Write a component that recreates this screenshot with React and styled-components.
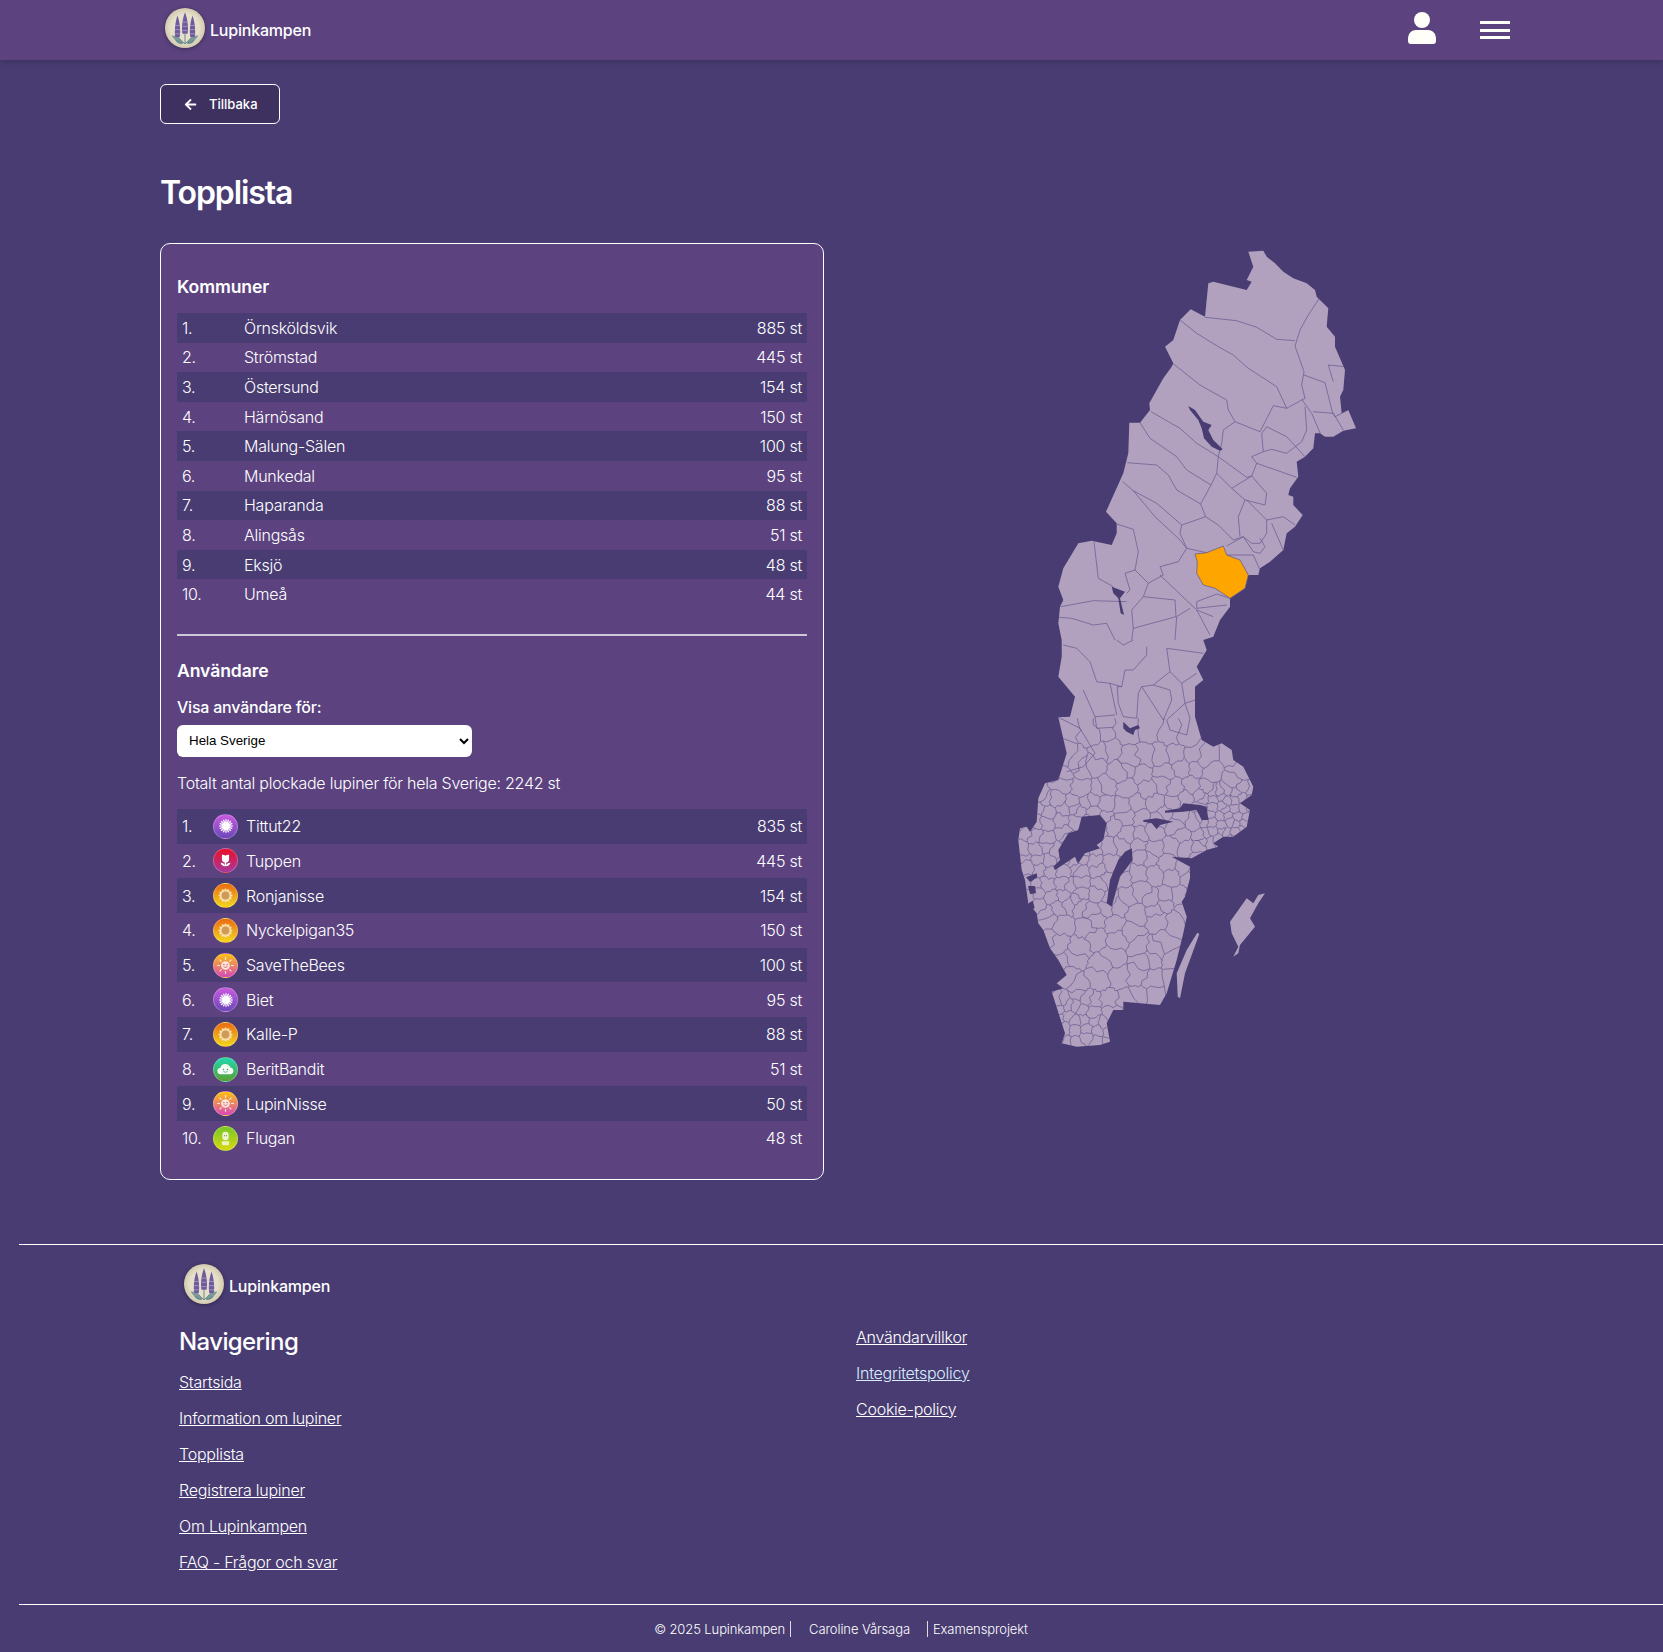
import React from "react";
import styled, { createGlobalStyle } from "styled-components";
import { FaArrowLeft } from "react-icons/fa";

const GlobalStyle = createGlobalStyle`
  html, body {
    margin: 0;
    background: #483c72;
    color: #fff;
    font-family: Inter, "Noto Sans", sans-serif;
    overflow-x: hidden;
  }
  * { box-sizing: border-box; }
`;

const Header = styled.header`
  height: 60px;
  background: #5c4380;
  box-shadow: 0 2px 6px rgba(0, 0, 0, 0.18);
  display: flex;
  align-items: center;
  padding: 0 153px 0 165px;
`;

const Brand = styled.div`
  display: flex;
  align-items: center;
  gap: 5px;
  font-size: 16px;
  font-weight: 500;
  letter-spacing: -0.2px;
  margin-left: ${({ $indent }) => $indent || 0}px;
`;

const HeaderIcons = styled.div`
  margin-left: auto;
  display: flex;
  align-items: center;
  gap: 44px;
`;

const UserIcon = styled.svg`
  margin-bottom: 4px;
`;

const LogoMark = styled.svg`
  margin-bottom: 4px;
  filter: drop-shadow(0 1px 2px rgba(0, 0, 0, 0.35));
`;

const Burger = styled.div`
  width: 30px;
  display: flex;
  flex-direction: column;
  gap: 4.5px;
  span {
    height: 3px;
    background: #fffef8;
  }
`;

const Main = styled.main`
  padding: 24px 0 0 160px;
`;

const BackButton = styled.button`
  width: 120px;
  height: 40px;
  display: flex;
  align-items: center;
  gap: 12px;
  padding: 0 0 0 23px;
  background: #3e3160;
  border: 1px solid #fff;
  border-radius: 6px;
  color: #fff;
  font: 500 13px Inter, sans-serif;
`;

const PageTitle = styled.h1`
  margin: 50px 0 31px;
  font-size: 32px;
  line-height: 38px;
  font-weight: 600;
  letter-spacing: -1.1px;
`;

const Columns = styled.div`
  display: flex;
  align-items: flex-start;
  gap: 186px;
`;

const Card = styled.section`
  width: 664px;
  background: #5c4380;
  border: 1px solid #fff;
  border-radius: 10px;
  padding: 32px 16px 23px;
`;

const CardTitle = styled.h2`
  margin: 0 0 15px;
  font-size: 17.6px;
  line-height: 22px;
  font-weight: 600;
  letter-spacing: -0.1px;
`;

const List = styled.ol`
  list-style: none;
  margin: 0;
  padding: 0;
`;

const Row = styled.li`
  height: ${({ $height }) => $height}px;
  display: flex;
  align-items: center;
  padding: 0 5px;
  font-size: 16px;
  font-weight: 300;
  letter-spacing: -0.24px;
  background: transparent;
  &:nth-child(odd) {
    background: #483c72;
  }
`;

const Rank = styled.span`
  width: ${({ $width }) => $width}px;
  flex: none;
`;

const Count = styled.span`
  margin-left: auto;
`;

const Divider = styled.hr`
  margin: 25px 0 24px;
  border: 0;
  height: 2px;
  background: #cfc8da;
`;

const FieldLabel = styled.label`
  display: block;
  margin: 1px 0 8px;
  font-size: 16px;
  line-height: 20px;
  font-weight: 500;
  letter-spacing: -0.22px;
`;

const Select = styled.select`
  display: block;
  width: 295px;
  height: 32px;
  padding: 0 4px 0 8px;
  background: #fff;
  border: 0;
  border-radius: 6px;
  color: #000;
  font: 400 13.33px "Liberation Sans", sans-serif;
`;

const Total = styled.p`
  margin: 14px 0;
  font-size: 16px;
  line-height: 24px;
  font-weight: 300;
  letter-spacing: -0.24px;
`;

const Avatar = styled.span`
  width: 25px;
  height: 25px;
  flex: none;
  margin-right: 8px;
  border-radius: 50%;
  border: 1px solid rgba(255, 255, 255, 0.25);
  background: linear-gradient(${({ $from }) => $from}, ${({ $to }) => $to});
  display: flex;
  align-items: center;
  justify-content: center;
`;

const MapBox = styled.div`
  margin-top: 2px;
  width: 360px;
  height: 815px;
  svg { display: block; }
`;

const Footer = styled.footer`
  margin: 64px 0 0 19px;
`;

const Rule = styled.hr`
  margin: 0;
  border: 0;
  height: 1px;
  background: #fff;
`;

const FooterBody = styled.div`
  padding: 19px 0 30px 160px;
`;

const FooterGrid = styled.div`
  display: grid;
  grid-template-columns: 677px 1fr;
`;

const FooterTitle = styled.h3`
  margin: 19px 0 14px;
  font-size: 24px;
  line-height: 29px;
  font-weight: 500;
  letter-spacing: -0.6px;
`;

const LinkList = styled.div`
  display: flex;
  flex-direction: column;
  align-items: flex-start;
  gap: 12px;
  margin-top: ${({ $top }) => $top || 0}px;
`;

const FooterLink = styled.a`
  color: ${({ $tint }) => $tint || "#fff"};
  font-size: 16px;
  line-height: 24px;
  font-weight: 300;
  letter-spacing: -0.24px;
  text-decoration: underline;
`;

const Credits = styled.div`
  height: 46px;
  padding-top: 3px;
  display: flex;
  align-items: center;
  justify-content: center;
  font-size: 13px;
  font-weight: 300;
  letter-spacing: -0.1px;
`;

const Credit = styled.span`
  line-height: 16px;
  padding: 0 ${({ $right }) => $right || 0}px 0 ${({ $left }) => $left || 0}px;
  border-left: ${({ $bar }) => ($bar === "left" ? "1px solid #ddd" : "0")};
  border-right: ${({ $bar }) => ($bar === "right" ? "1px solid #ddd" : "0")};
`;

const kommuner = [
  ["Örnsköldsvik", 885], ["Strömstad", 445], ["Östersund", 154], ["Härnösand", 150], ["Malung-Sälen", 100],
  ["Munkedal", 95], ["Haparanda", 88], ["Alingsås", 51], ["Eksjö", 48], ["Umeå", 44],
];

const users = [
  ["Tittut22", 835, "spark"], ["Tuppen", 445, "tulip"], ["Ronjanisse", 154, "sunflower"],
  ["Nyckelpigan35", 150, "sunflower"], ["SaveTheBees", 100, "sun"], ["Biet", 95, "spark"],
  ["Kalle-P", 88, "sunflower"], ["BeritBandit", 51, "cloud"], ["LupinNisse", 50, "sun"], ["Flugan", 48, "cactus"],
];

const badges = {
  spark: { from: "#c95ae0", to: "#6a48b8" },
  tulip: { from: "#e8102a", to: "#a8389c" },
  sunflower: { from: "#ea6a10", to: "#f2d81e" },
  sun: { from: "#fcc010", to: "#d848b8" },
  cloud: { from: "#20d8b0", to: "#58a030" },
  cactus: { from: "#78c828", to: "#d8d810" },
};

function BadgeIcon({ kind }) {
  if (kind === "spark") {
    const rays = Array.from({ length: 16 }, (_, i) => {
      const a = (i * Math.PI) / 8;
      return <line key={i} x1="12" y1="12" x2={12 + Math.cos(a) * 9} y2={12 + Math.sin(a) * 9} stroke="#fff" strokeWidth="1.7" />;
    });
    return <svg width="18" height="18" viewBox="0 0 24 24">{rays}<circle cx="12" cy="12" r="5" fill="#fff" /></svg>;
  }
  if (kind === "tulip") {
    return (
      <svg width="17" height="17" viewBox="0 0 24 24" fill="#fff">
        <path d="M7 4c2 0 3 1 5 1s3-1 5-1v6a5 5 0 0 1-10 0z" />
        <rect x="11" y="14" width="2" height="6" />
        <path d="M5 15c4 0 6 2 6.500 5C8 20 6 18 5 15zM19 15c-4 0-6 2-6.500 5C16 20 18 18 19 15z" />
      </svg>
    );
  }
  if (kind === "sunflower") {
    const petals = Array.from({ length: 12 }, (_, i) => (
      <ellipse key={i} cx="12" cy="5" rx="1.800" ry="2.800" fill="#f8e2b4" transform={`rotate(${i * 30} 12 12)`} />
    ));
    return <svg width="17" height="17" viewBox="0 0 24 24">{petals}<circle cx="12" cy="12" r="5.500" fill="#cf9a58" /></svg>;
  }
  if (kind === "sun") {
    const rays = Array.from({ length: 8 }, (_, i) => (
      <rect key={i} x="11.300" y="1.500" width="1.400" height="3.500" fill="#fff" opacity="0.8" transform={`rotate(${i * 45} 12 12)`} />
    ));
    return (
      <svg width="19" height="19" viewBox="0 0 24 24">
        {rays}
        <circle cx="12" cy="12" r="5.500" fill="#fde6d8" />
        <circle cx="10" cy="11" r="0.800" fill="#c03060" />
        <circle cx="14" cy="11" r="0.800" fill="#c03060" />
        <path d="M9.500 13.500q2.500 2 5 0" stroke="#c03060" strokeWidth="0.800" fill="none" />
      </svg>
    );
  }
  if (kind === "cloud") {
    return (
      <svg width="19" height="19" viewBox="0 0 24 24">
        <path d="M6 18a4 4 0 0 1-.5-8A6.500 6.500 0 0 1 18 9.500 4.300 4.300 0 0 1 18.500 18z" fill="#f4faf4" />
        <circle cx="9.500" cy="12" r="0.900" fill="#3a9a70" />
        <circle cx="14.500" cy="12" r="0.900" fill="#3a9a70" />
        <path d="M9.500 14.500q2.500 2 5 0" stroke="#3a9a70" strokeWidth="0.900" fill="none" />
      </svg>
    );
  }
  return (
    <svg width="17" height="17" viewBox="0 0 24 24">
      <rect x="7.500" y="2.500" width="9" height="12" rx="4.500" fill="#eef4d8" />
      <circle cx="10.500" cy="8" r="0.800" fill="#6a9a20" />
      <circle cx="13.500" cy="8" r="0.800" fill="#6a9a20" />
      <path d="M6.500 16h11l-1 5.500h-9z" fill="#eef4c0" />
    </svg>
  );
}

function Logo({ id }) {
  const spires = [[15, 9, 3.600], [24, 5, 4], [33, 9, 3.600]];
  return (
    <LogoMark width="40" height="40" viewBox="0 0 48 48">
      <defs>
        <radialGradient id={id}>
          <stop offset="0.700" stopColor="#e6dfc9" />
          <stop offset="1" stopColor="#d2c9ae" />
        </radialGradient>
      </defs>
      <circle cx="24" cy="24" r="24" fill={`url(#${id})`} />
      <path d="M8 33c6 0 11 3 14 9-6 0-11-3-14-9zM40 33c-6 0-11 3-14 9 6 0 11-3 14-9z" fill="#7f9c9e" />
      <path d="M12 38c4 0 7 2 10 5-4 1-8-1-10-5zM36 38c-4 0-7 2-10 5 4 1 8-1 10-5z" fill="#6f8e92" />
      {spires.map(([x, y, w]) => (
        <g key={x}>
          <path d={`M${x} ${y}C${x + w} ${y + 10} ${x + w} ${y + 22} ${x + w - 1} ${y + 26}H${x - w + 1}C${x - w} ${y + 22} ${x - w} ${y + 10} ${x} ${y}z`} fill="#6e5a9c" />
          <path d={`M${x} ${y + 26}L24 43`} stroke="#6b8b86" strokeWidth="1.200" />
          <path d={`M${x - 3} ${y + 12}h6M${x - 3} ${y + 17}h6M${x - 3} ${y + 22}h6`} stroke="#a89ac4" strokeWidth="1" />
        </g>
      ))}
    </LogoMark>
  );
}

/* map shapes, written in the coordinates of two crops of the picture */
const north = ([x, y]) => [x / 3 + 1000, y / 3 + 240];
const south = ([x, y]) => [x / 3 + 1000, y / 3 + 640];
const toPoints = (pts) => pts.map(([x, y]) => `${x.toFixed(1)},${y.toFixed(1)}`).join(" ");

const outline = [
  ...[[745,35],[790,32],[800,50],[825,70],[850,95],[880,115],[920,130],[945,150],[950,170],[985,205],[980,260],[1005,290],[1005,320],[1035,390],[1030,450],[1020,470],[1025,520],[1045,510],[1068,565],[1030,572],[1000,590],[975,590],[960,580],[945,580],[940,625],[915,650],[890,665],[895,710],[870,745],[865,765],[880,770],[880,795],[908,825],[885,860],[860,880],[850,930],[810,965],[780,985],[775,1005],[745,1005],[735,1045],[690,1075],[690,1100],[660,1140],[640,1190]].map(north),
  ...[[610,0],[620,30],[590,80],[610,120],[585,140],[585,230],[605,300],[640,320],[665,310],[695,330],[700,360],[730,380],[760,440],[755,465],[720,490],[750,510],[740,560],[700,590],[670,590],[640,610],[655,620],[620,630],[575,655],[515,650],[570,680],[570,715],[555,770],[545,785],[560,830],[550,880],[530,960],[500,1060],[480,1095],[370,1085],[370,1110],[340,1110],[320,1150],[330,1205],[300,1215],[230,1220],[185,1210],[195,1180],[155,1055],[190,1045],[170,1030],[200,1005],[175,960],[150,925],[130,870],[115,850],[110,820],[85,790],[75,720],[65,690],[55,600],[60,565],[80,560],[90,575],[110,545],[115,475],[135,430],[175,420],[200,340],[175,232],[210,230],[225,170],[175,110],[185,50],[185,0]].map(south),
  ...[[175,1150],[180,1100],[190,1080],[175,1040],[190,985],[235,910],[275,902],[335,915],[350,880],[350,850],[318,815],[370,700],[385,640],[388,548],[420,548],[450,510],[448,490],[490,415],[515,380],[520,370],[495,320],[520,300],[540,240],[572,208],[615,230],[625,130],[640,125],[740,150],[755,125],[740,120],[760,80]].map(north),
];

const northBorders = [
  [[615,232],[710,242],[770,262],[830,298],[885,302]],
  [[960,172],[925,225],[900,270],[885,318],[912,395],[905,435],[915,475],[860,505],[830,440],[745,385],[700,345],[655,320],[590,280],[540,240]],
  [[912,405],[975,428],[998,520],[1005,530],[1045,510]],
  [[985,375],[1000,425]],
  [[985,375],[1035,380]],
  [[518,370],[600,435],[680,480],[685,510],[705,545],[780,575],[820,497],[860,505]],
  [[905,478],[935,520],[965,590]],
  [[940,515],[1000,520],[1030,570]],
  [[915,500],[920,570],[905,605],[860,640],[815,628],[790,635],[785,580],[800,560],[860,590],[915,650]],
  [[790,635],[755,650],[770,670],[890,712]],
  [[770,670],[755,708],[695,745],[650,700],[655,650]],
  [[705,545],[670,570],[665,610],[655,650],[740,712],[755,708]],
  [[453,515],[540,565],[590,610],[655,650]],
  [[420,548],[450,595],[530,650],[560,690],[633,735],[650,700]],
  [[382,668],[470,675],[505,705],[530,750],[602,792],[633,735]],
  [[368,725],[400,752],[470,790],[545,855],[617,830],[602,792]],
  [[400,752],[440,800],[465,830],[540,900],[560,925],[620,938]],
  [[545,855],[540,880],[560,925]],
  [[617,830],[655,855],[700,900],[730,890],[680,918]],
  [[735,780],[695,745]],
  [[735,780],[715,830],[720,890]],
  [[735,780],[795,795],[800,760],[755,708]],
  [[740,780],[800,840],[800,880],[780,910],[755,910],[730,890]],
  [[800,840],[850,830],[885,855]],
  [[815,850],[850,930]],
  [[730,890],[760,935],[780,940],[795,920],[780,895]],
  [[680,945],[760,945],[780,990]],
  [[350,852],[400,868],[415,935],[405,990],[445,1030]],
  [[282,905],[295,1015],[340,1040]],
  [[560,925],[535,965],[480,980],[490,1005],[445,1030]],
  [[405,990],[375,1000],[390,1050],[380,1060]],
  [[182,1100],[280,1082],[380,1085]],
  [[175,1132],[215,1135],[280,1155],[320,1150],[345,1200]],
  [[480,1005],[590,1110],[630,1185]],
  [[445,1030],[430,1070],[395,1110],[400,1165],[395,1200]],
  [[430,1070],[525,1080],[528,1130],[400,1165]],
  [[690,1075],[650,1062],[590,1085],[590,1105],[680,1095]],
  [[590,1110],[640,1130]],
  [[570,1105],[530,1130],[525,1200]],
].map((line) => line.map(north));

const middleBorders = [
  [[190,15],[230,25],[270,65],[290,125],[330,130],[365,140]],
  [[350,0],[370,15],[400,0]],
  [[440,20],[440,45],[400,90],[375,90],[365,140],[352,140],[355,190],[370,230],[410,235],[415,160],[425,140],[490,240],[515,180],[510,150],[460,135],[425,140]],
  [[500,25],[510,95],[545,130],[590,100]],
  [[500,25],[610,40]],
  [[510,95],[460,135]],
  [[545,130],[555,190],[500,240],[510,270],[560,285],[570,235],[555,190],[585,180]],
  [[330,130],[350,225]],
  [[250,150],[285,230],[345,225]],
  [[285,230],[290,265],[340,262]],
  [[175,232],[240,265],[285,340],[250,380],[200,395]],
].map((line) => line.map(south));

const lakes = [
  [[245,530],[300,525],[320,550],[310,600],[290,615],[300,625],[255,640],[235,670],[225,650],[165,690],[160,680],[180,660],[175,630],[205,580],[235,570]],
  [[395,625],[398,660],[360,710],[335,800],[320,790],[330,720],[355,660],[375,635]],
  [[430,540],[470,535],[520,545],[480,555],[470,568],[455,550],[430,545]],
  [[495,512],[540,505],[550,490],[600,495],[620,500],[625,540],[605,540],[590,510],[550,515],[495,518]],
  [[370,245],[390,265],[415,255],[420,265],[405,270],[400,285],[380,275],[370,265]],
  [[78,712],[110,700],[112,712],[90,726]],
  [[84,738],[105,738],[108,760],[90,762]],
  [[86,790],[98,782],[104,804],[94,810]],
].map((lake) => lake.map(south));

const northLakes = [
  [[335,1040],[375,1055],[360,1075],[372,1125],[362,1120],[355,1075],[340,1060]],
  [[565,498],[585,510],[610,545],[635,555],[625,570],[640,600],[668,628],[660,632],[635,620],[612,595],[605,565],[595,540],[570,510]],
].map((lake) => lake.map(north));

const islands = [
  [[592,878],[598,882],[575,945],[555,1000],[540,1075],[533,1070],[530,1000],[560,930]],
  [[795,760],[775,765],[760,790],[740,775],[690,845],[695,880],[715,920],[700,950],[715,940],[720,915],[765,860],[750,835],[775,790]],
].map((island) => island.map(south));

const selected = [[585,942],[620,938],[670,918],[680,945],[720,960],[745,1005],[735,1045],[690,1075],[645,1045],[610,1035],[590,1000],[592,965]].map(north);

// the southern municipalities are too many to trace, so they are grown from a jittered grid
const noise = (a, b) => {
  const v = Math.sin(a * 12.9898 + b * 78.233) * 43758.5453;
  return v - Math.floor(v);
};

const seedAreas = [
  [170, 240, 600, 320, 60], [170, 320, 600, 460, 48], [600, 320, 770, 440, 56],
  [600, 440, 770, 600, 24], [55, 460, 300, 830, 36], [300, 460, 600, 830, 46],
  [110, 830, 560, 1060, 54], [340, 1060, 500, 1110, 55], [150, 1060, 340, 1225, 31],
];

const seeds = seedAreas.flatMap(([x0, y0, x1, y1, step]) => {
  const out = [];
  for (let y = y0 + step / 2; y < y1; y += step) {
    for (let x = x0 + step / 2; x < x1; x += step) {
      out.push([x + (noise(x, y) - 0.5) * step * 0.8, y + (noise(y, x) - 0.5) * step * 0.8]);
    }
  }
  return out;
});

const BOX = [40, 235, 800, 1240];

function clipCell(cell, [ax, ay], [bx, by]) {
  const mx = (ax + bx) / 2;
  const my = (ay + by) / 2;
  const side = ([x, y]) => (x - mx) * (bx - ax) + (y - my) * (by - ay);
  const out = [];
  cell.forEach((p, i) => {
    const q = cell[(i + 1) % cell.length];
    const sp = side(p);
    const sq = side(q);
    if (sp <= 0) out.push(p);
    if (sp < 0 !== sq < 0) {
      const t = sp / (sp - sq);
      out.push([p[0] + (q[0] - p[0]) * t, p[1] + (q[1] - p[1]) * t]);
    }
  });
  return out;
}

function cellBorders() {
  const done = new Set();
  let d = "";
  const onBox = ([x, y]) => x === BOX[0] || x === BOX[2] || y === BOX[1] || y === BOX[3];
  seeds.forEach((seed) => {
    let cell = [[BOX[0], BOX[1]], [BOX[2], BOX[1]], [BOX[2], BOX[3]], [BOX[0], BOX[3]]];
    seeds.forEach((other) => {
      if (other !== seed) cell = clipCell(cell, seed, other);
    });
    cell.forEach((p, i) => {
      const q = cell[(i + 1) % cell.length];
      if (onBox(p) && onBox(q)) return;
      const [a, b] = p[0] < q[0] ? [p, q] : [q, p];
      const key = [a, b].map((v) => v.map((n) => n.toFixed(1)).join()).join();
      if (done.has(key)) return;
      done.add(key);
      const [x0, y0] = south(a);
      const [x1, y1] = south(b);
      const nx = y0 - y1;
      const ny = x1 - x0;
      d += `M${x0.toFixed(1)} ${y0.toFixed(1)}`;
      for (let s = 1; s <= 4; s++) {
        const t = s / 4;
        const w = s === 4 ? 0 : (noise(x0 + s, y1) - 0.5) * 0.3;
        d += `L${(x0 + (x1 - x0) * t + nx * w).toFixed(1)} ${(y0 + (y1 - y0) * t + ny * w).toFixed(1)}`;
      }
    });
  });
  return d;
}

const cellPath = cellBorders();

function SwedenMap() {
  const land = "#b1a1bf";
  const line = "#6c5c90";
  const water = "#483c72";
  return (
    <svg width="360" height="815" viewBox="1010 245 360 815">
      <defs>
        <clipPath id="landClip"><polygon points={toPoints(outline)} /></clipPath>
      </defs>
      <polygon points={toPoints(outline)} fill={land} />
      {islands.map((island, i) => <polygon key={i} points={toPoints(island)} fill={land} />)}
      <g clipPath="url(#landClip)" fill="none" stroke={line} strokeWidth="0.75">
        <path d={cellPath} />
        {[...northBorders, ...middleBorders].map((border, i) => <polyline key={i} points={toPoints(border)} />)}
      </g>
      {[...lakes, ...northLakes].map((lake, i) => <polygon key={i} points={toPoints(lake)} fill={water} />)}
      <polygon points={toPoints(selected)} fill="#ffa500" stroke={line} strokeWidth="0.8" />
    </svg>
  );
}

export default function App() {
  return (
    <>
      <GlobalStyle />
      <Header>
        <Brand><Logo id="logoTop" />Lupinkampen</Brand>
        <HeaderIcons>
          <UserIcon width="28" height="32" viewBox="0 0 28 32" fill="#fffef8">
            <circle cx="14" cy="8" r="8" />
            <path d="M0 27c0-6 4-9 8-9h12c4 0 8 3 8 9v2c0 2-1 3-3 3H3c-2 0-3-1-3-3z" />
          </UserIcon>
          <Burger><span /><span /><span /></Burger>
        </HeaderIcons>
      </Header>
      <Main>
        <BackButton><FaArrowLeft size={13} />Tillbaka</BackButton>
        <PageTitle>Topplista</PageTitle>
        <Columns>
          <Card>
            <CardTitle>Kommuner</CardTitle>
            <List>
              {kommuner.map(([name, count], i) => (
                <Row key={name} $height={29.6}>
                  <Rank $width={62}>{i + 1}.</Rank>
                  <span>{name}</span>
                  <Count>{count} st</Count>
                </Row>
              ))}
            </List>
            <Divider />
            <CardTitle>Användare</CardTitle>
            <FieldLabel htmlFor="area">Visa användare för:</FieldLabel>
            <Select id="area" defaultValue="all">
              <option value="all">Hela Sverige</option>
            </Select>
            <Total>Totalt antal plockade lupiner för hela Sverige: 2242 st</Total>
            <List>
              {users.map(([name, count, badge], i) => (
                <Row key={name} $height={34.7}>
                  <Rank $width={31}>{i + 1}.</Rank>
                  <Avatar $from={badges[badge].from} $to={badges[badge].to}><BadgeIcon kind={badge} /></Avatar>
                  <span>{name}</span>
                  <Count>{count} st</Count>
                </Row>
              ))}
            </List>
          </Card>
          <MapBox><SwedenMap /></MapBox>
        </Columns>
      </Main>
      <Footer>
        <Rule />
        <FooterBody>
          <Brand $indent={5}><Logo id="logoBottom" />Lupinkampen</Brand>
          <FooterGrid>
            <div>
              <FooterTitle>Navigering</FooterTitle>
              <LinkList>
                <FooterLink href="#">Startsida</FooterLink>
                <FooterLink href="#">Information om lupiner</FooterLink>
                <FooterLink href="#">Topplista</FooterLink>
                <FooterLink href="#">Registrera lupiner</FooterLink>
                <FooterLink href="#">Om Lupinkampen</FooterLink>
                <FooterLink href="#">FAQ - Frågor och svar</FooterLink>
              </LinkList>
            </div>
            <LinkList $top={17}>
              <FooterLink href="#">Användarvillkor</FooterLink>
              <FooterLink href="#" $tint="#d8eeff">Integritetspolicy</FooterLink>
              <FooterLink href="#">Cookie-policy</FooterLink>
            </LinkList>
          </FooterGrid>
        </FooterBody>
        <Rule />
        <Credits>
          <Credit $bar="right" $right={5}>© 2025 Lupinkampen</Credit>
          <Credit $left={18} $right={17}>Caroline Vårsaga</Credit>
          <Credit $bar="left" $left={5}>Examensprojekt</Credit>
        </Credits>
      </Footer>
    </>
  );
}
